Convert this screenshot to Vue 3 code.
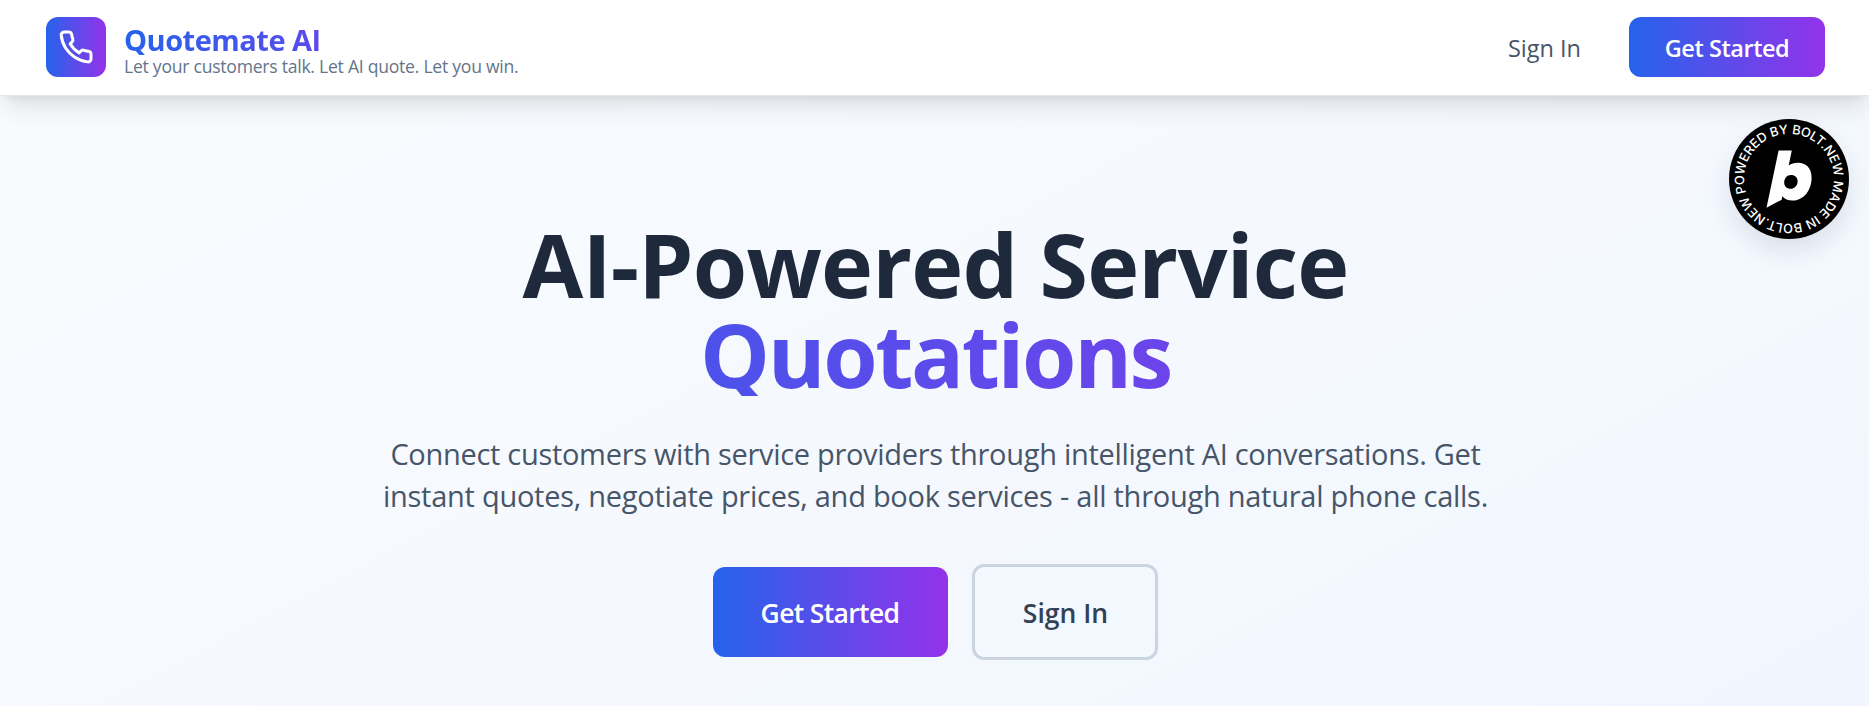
<template>
	<div class="page">
		<header class="header">
			<div class="brand">
				<div class="logo">
					<svg viewBox="0 0 24 24" class="logo-icon">
						<path d="M22 16.92v3a2 2 0 0 1-2.18 2 19.79 19.79 0 0 1-8.63-3.07 19.5 19.5 0 0 1-6-6 19.79 19.79 0 0 1-3.07-8.67A2 2 0 0 1 4.11 2h3a2 2 0 0 1 2 1.72 12.84 12.84 0 0 0 .7 2.81 2 2 0 0 1-.45 2.11L8.09 9.91a16 16 0 0 0 6 6l1.27-1.27a2 2 0 0 1 2.11-.45 12.84 12.84 0 0 0 2.81.7A2 2 0 0 1 22 16.92z"/>
					</svg>
				</div>
				<div class="brand-text">
					<div class="brand-name">Quotemate AI</div>
					<div class="brand-tagline">Let your customers talk. Let AI quote. Let you win.</div>
				</div>
			</div>
			<nav class="nav">
				<a class="nav-link">Sign In</a>
				<button class="nav-button">Get Started</button>
			</nav>
		</header>

		<main class="hero">
			<h1 class="title">
				<span class="title-line">AI-Powered Service</span>
				<span class="title-line title-accent">Quotations</span>
			</h1>
			<p class="lead">
				<span class="lead-first">Connect customers with service providers through intelligent AI conversations. Get</span>
				<span class="lead-second">instant quotes, negotiate prices, and book services - all through natural phone calls.</span>
			</p>
			<div class="actions">
				<button class="btn btn-primary">Get Started</button>
				<button class="btn btn-outline">Sign In</button>
			</div>
		</main>

		<a class="badge">
			<svg viewBox="0 0 120 120">
				<defs>
					<path id="ring" d="M60 105A45 45 0 1 1 60.01 105"/>
				</defs>
				<circle cx="60" cy="60" r="60" fill="#000"/>
				<text class="badge-text" transform="rotate(72 60 60)">
					<textPath href="#ring" textLength="279">POWERED BY BOLT.NEW MADE IN BOLT.NEW</textPath>
				</text>
				<path fill="#fff" fill-rule="evenodd" d="M49.6 31.5H62.8L59.7 46.4C62.3 44.6 65 43.7 69 43.7C77 43.7 82.6 49 82.6 58.5C82.6 71.5 74.5 81.6 63.5 81.6C59 81.6 55.5 80 53.2 77.3L52.7 80.7L37.5 88.7ZM62 56C57.8 56 55.2 59.6 55.2 63.5C55.2 67.3 57.8 69.8 61.4 69.8C65.8 69.8 68.6 66.3 68.6 62.2C68.6 58.5 66 56 62 56Z"/>
			</svg>
		</a>
	</div>
</template>

<script setup>
</script>

<style>
body {
	margin: 0;
	overflow: hidden;
}
</style>

<style scoped>
.page {
	height: 706px;
	overflow: hidden;
	font-family: 'Open Sans', 'Noto Sans', sans-serif;
	background: linear-gradient(to bottom right, #f8fafc 0%, #f8fbfe 15%, #f0f5ff 100%) 0 0 / 100% 1000px;
	position: relative;
}

.header {
	display: flex;
	justify-content: space-between;
	align-items: center;
	box-sizing: border-box;
	height: 96px;
	padding: 0 44px 1px 46px;
	background: #fff;
	border-bottom: 1px solid #e2e8f0;
	box-shadow: 0 15px 22.5px -4.5px rgba(0, 0, 0, .1), 0 6px 9px -6px rgba(0, 0, 0, .1);
}

.brand {
	display: flex;
	align-items: center;
	gap: 18px;
}

.logo {
	display: flex;
	align-items: center;
	justify-content: center;
	width: 60px;
	height: 60px;
	border-radius: 12px;
	background: linear-gradient(to right, #2563eb, #9333ea);
}

.logo-icon {
	width: 36px;
	height: 36px;
	fill: none;
	stroke: #fff;
	stroke-width: 2;
	stroke-linecap: round;
	stroke-linejoin: round;
}

.brand-text {
	width: 394px;
	margin-top: 6px;
	white-space: nowrap;
}

.brand-name {
	font-size: 29px;
	font-weight: 700;
	line-height: 31px;
	letter-spacing: -.5px;
	color: transparent;
	background: linear-gradient(to right, #2563eb, #9333ea);
	background-clip: text;
}

.brand-tagline {
	font-size: 17.6px;
	line-height: 22px;
	letter-spacing: -.26px;
	color: #64748b;
}

.nav {
	display: flex;
	align-items: center;
	gap: 48px;
}

.nav-link {
	padding-top: 2px;
	font-size: 23.5px;
	line-height: 36px;
	color: #475569;
}

button {
	font-family: inherit;
	white-space: nowrap;
	border: 0;
	padding: 0;
	border-radius: 12px;
}

.nav-button {
	width: 196px;
	height: 60px;
	padding-top: 2px;
	font-size: 23.5px;
	font-weight: 600;
	letter-spacing: -.45px;
	color: #fff;
	background: linear-gradient(to right, #2563eb, #9333ea);
}

.hero {
	display: flex;
	flex-direction: column;
	align-items: center;
	width: 1344px;
	margin: 0 auto;
	padding: 123px 0 0 2px;
}

.title {
	width: 100%;
	margin: 0;
	font-size: 88px;
	font-weight: 700;
	line-height: 90px;
	letter-spacing: -.8px;
	text-align: center;
	color: #1e293b;
}

.title-line {
	display: block;
}

.title-accent {
	letter-spacing: -2.4px;
	color: transparent;
	background: linear-gradient(to right, #2563eb, #9333ea) center / 1680px 100%;
	background-clip: text;
	clip-path: inset(0 0 3px 0);
}

.lead {
	display: flex;
	flex-direction: column;
	align-items: center;
	margin: 34px 0 0;
	font-size: 29px;
	line-height: 42px;
	white-space: nowrap;
	color: #475569;
}

.lead-first {
	letter-spacing: -.3px;
}

.lead-second {
	letter-spacing: -.26px;
}

.actions {
	display: flex;
	align-items: center;
	gap: 24px;
	margin-top: 47px;
}

.btn {
	box-sizing: border-box;
	font-size: 26.5px;
	font-weight: 600;
}

.btn-primary {
	width: 235px;
	height: 90px;
	padding: 2px 1px 0 0;
	letter-spacing: -.65px;
	color: #fff;
	background: linear-gradient(to right, #2563eb, #9333ea);
}

.btn-outline {
	width: 186px;
	height: 96px;
	padding: 2px 0 0 1px;
	color: #334155;
	background: transparent;
	border: 3px solid #cbd5e1;
}

.badge {
	position: absolute;
	top: 119px;
	right: 20px;
	width: 120px;
	height: 120px;
	border-radius: 50%;
	box-shadow: 0 12px 24px rgba(15, 23, 42, .1);
}

.badge svg {
	display: block;
}

.badge-text {
	font-family: Inter, sans-serif;
	font-size: 12.8px;
	font-weight: 500;
	fill: #fff;
}
</style>
